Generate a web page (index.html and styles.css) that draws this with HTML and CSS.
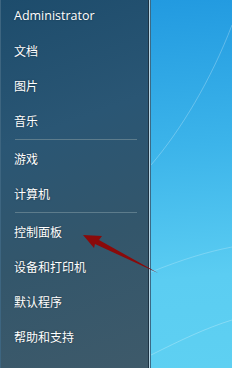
FILE: index.html
```html
<!DOCTYPE html>
<html lang="zh-CN">

<head>
    <meta charset="UTF-8">
    <title>开始菜单</title>
    <link rel="stylesheet" href="styles.css">
</head>

<body>
    <div class="screen">
        <!-- Right column of the start menu -->
        <div class="menu">
            <ul class="links">
                <li class="user">Administrator</li>
                <li>文档</li>
                <li>图片</li>
                <li>音乐</li>
                <li class="sep"></li>
                <li>游戏</li>
                <li>计算机</li>
                <li class="sep"></li>
                <li>控制面板</li>
                <li>设备和打印机</li>
                <li>默认程序</li>
                <li>帮助和支持</li>
            </ul>
        </div>
        <div class="edge"></div>

        <!-- Desktop behind the menu -->
        <div class="desktop">
            <svg class="streaks" width="81" height="368" viewBox="0 0 81 368">
                <path d="M0 165 C30 130 60 80 81 25" stroke="rgba(255,255,255,0.25)" stroke-width="1" fill="none" />
                <path d="M0 272 C30 260 55 252 81 247" stroke="rgba(255,255,255,0.22)" stroke-width="1" fill="none" />
                <path d="M0 355 C30 340 55 328 81 320" stroke="rgba(255,255,255,0.25)" stroke-width="1" fill="none" />
            </svg>
        </div>

        <!-- Red pointer drawn over the menu -->
        <svg class="pointer" width="232" height="368" viewBox="0 0 232 368">
            <polygon points="83,235 102,236 99,240 158,273 95,244 94,248" fill="#8a0a0a" />
        </svg>
    </div>
</body>

</html>
```

FILE: styles.css
```css
body {
    margin: 0;
    font-family: "Noto Sans CJK SC", "Noto Sans", sans-serif;
    font-size: 12px;
}

.screen {
    position: relative;
    width: 232px;
    height: 368px;
    display: flex;
    overflow: hidden;
}

.menu {
    width: 149px;
    height: 368px;
    background: linear-gradient(160deg, #1d4c6c 0%, #2a5674 35%, #33566b 65%, #3e5a6a 100%);
    border-left: 1px solid #3d6580;
    box-sizing: border-box;
}

.links {
    list-style: none;
    margin: -2px 0 0 0;
    padding: 0;
}

.links li {
    height: 35px;
    line-height: 35px;
    padding-left: 13px;
    color: #fff;
    text-shadow: 0 0 2px rgba(0, 0, 0, 0.4);
    white-space: nowrap;
}

.links li.user {
    font-family: "Open Sans", "Noto Sans", sans-serif;
    font-size: 12.5px;
}

.links li.sep {
    height: 3px;
    line-height: 3px;
    margin-left: 14px;
    margin-right: 11px;
    padding: 0;
    box-sizing: border-box;
    border-top: 1px solid transparent;
}

.links li.sep::before {
    content: "";
    display: block;
    height: 1px;
    background: #5d7c8c;
}

.edge {
    width: 3px;
    height: 368px;
    background: linear-gradient(to right, #1c3242 0, #1c3242 1px, #b8d4e2 1px, #b8d4e2 2px, #3a6a86 2px);
}

.desktop {
    flex: 1;
    height: 368px;
    background: linear-gradient(175deg, #229ae0 0%, #3cb4ea 40%, #5bcdf2 75%, #5ed0f2 100%);
}

.streaks {
    display: block;
}

.pointer {
    position: absolute;
    left: 0;
    top: 0;
}
```
